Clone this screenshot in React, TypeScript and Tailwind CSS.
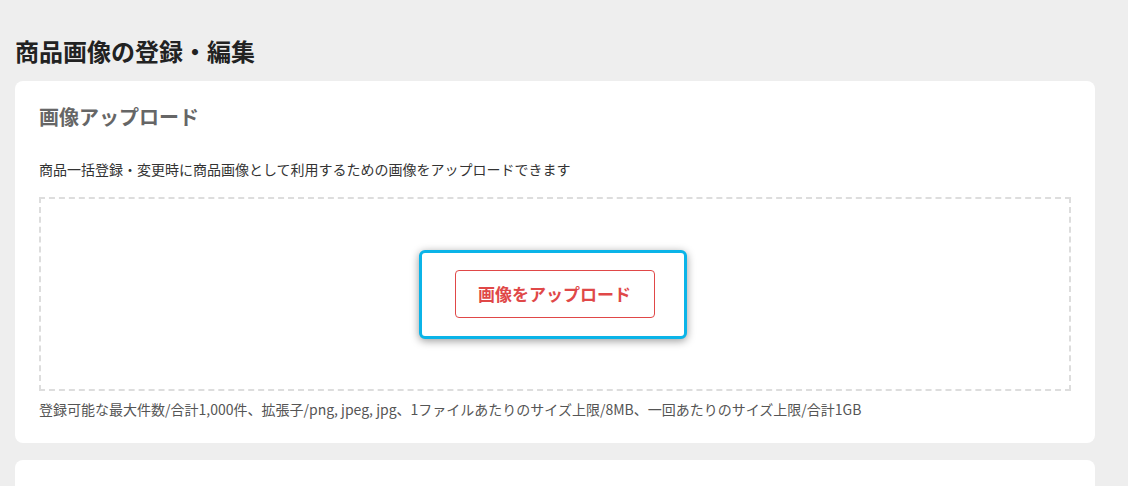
import React from "react";

export default function App() {
  return (
    <div
      className="min-h-[486px] w-[1128px] bg-[#eeeeee] pl-[15px] pr-[33px] pt-[33px]"
      style={{ fontFamily: '"Noto Sans CJK JP", "Noto Sans", sans-serif' }}
    >
      <h1 className="h-[36px] text-[24px] font-bold leading-[36px] text-[#222222]">
        商品画像の登録・編集
      </h1>
      <div className="mt-[12px] rounded-[8px] bg-white px-[24px] pb-[24px] pt-[24px]">
        <h2 className="h-[24px] text-[20px] font-bold leading-[24px] text-[#666666]">
          画像アップロード
        </h2>
        <p className="mt-[30px] h-[20px] text-[14px] leading-[20px] text-[#333333]">
          商品一括登録・変更時に商品画像として利用するための画像をアップロードできます
        </p>
        <div className="mt-[18px] flex h-[194px] items-center justify-center border-2 border-dashed border-[#dddddd] pr-[4px]">
          <div className="flex h-[89px] w-[268px] items-center justify-center rounded-[6px] border-[3px] border-[#0bb4e8] bg-white pl-[3px] shadow-[0_2px_9px_rgba(0,0,0,0.4)]">
            <button className="h-[48px] w-[200px] rounded-[4px] border border-[#e04848] bg-white text-[17px] font-bold text-[#e04848]">
              画像をアップロード
            </button>
          </div>
        </div>
        <p className="mt-[8px] h-[20px] text-[14px] leading-[20px] text-[#555555]">
          登録可能な最大件数/合計1,000件、拡張子/png, jpeg, jpg、1ファイルあたりのサイズ上限/8MB、一回あたりのサイズ上限/合計1GB
        </p>
      </div>
      <div className="mt-[17px] h-[40px] rounded-t-[8px] bg-white" />
    </div>
  );
}
